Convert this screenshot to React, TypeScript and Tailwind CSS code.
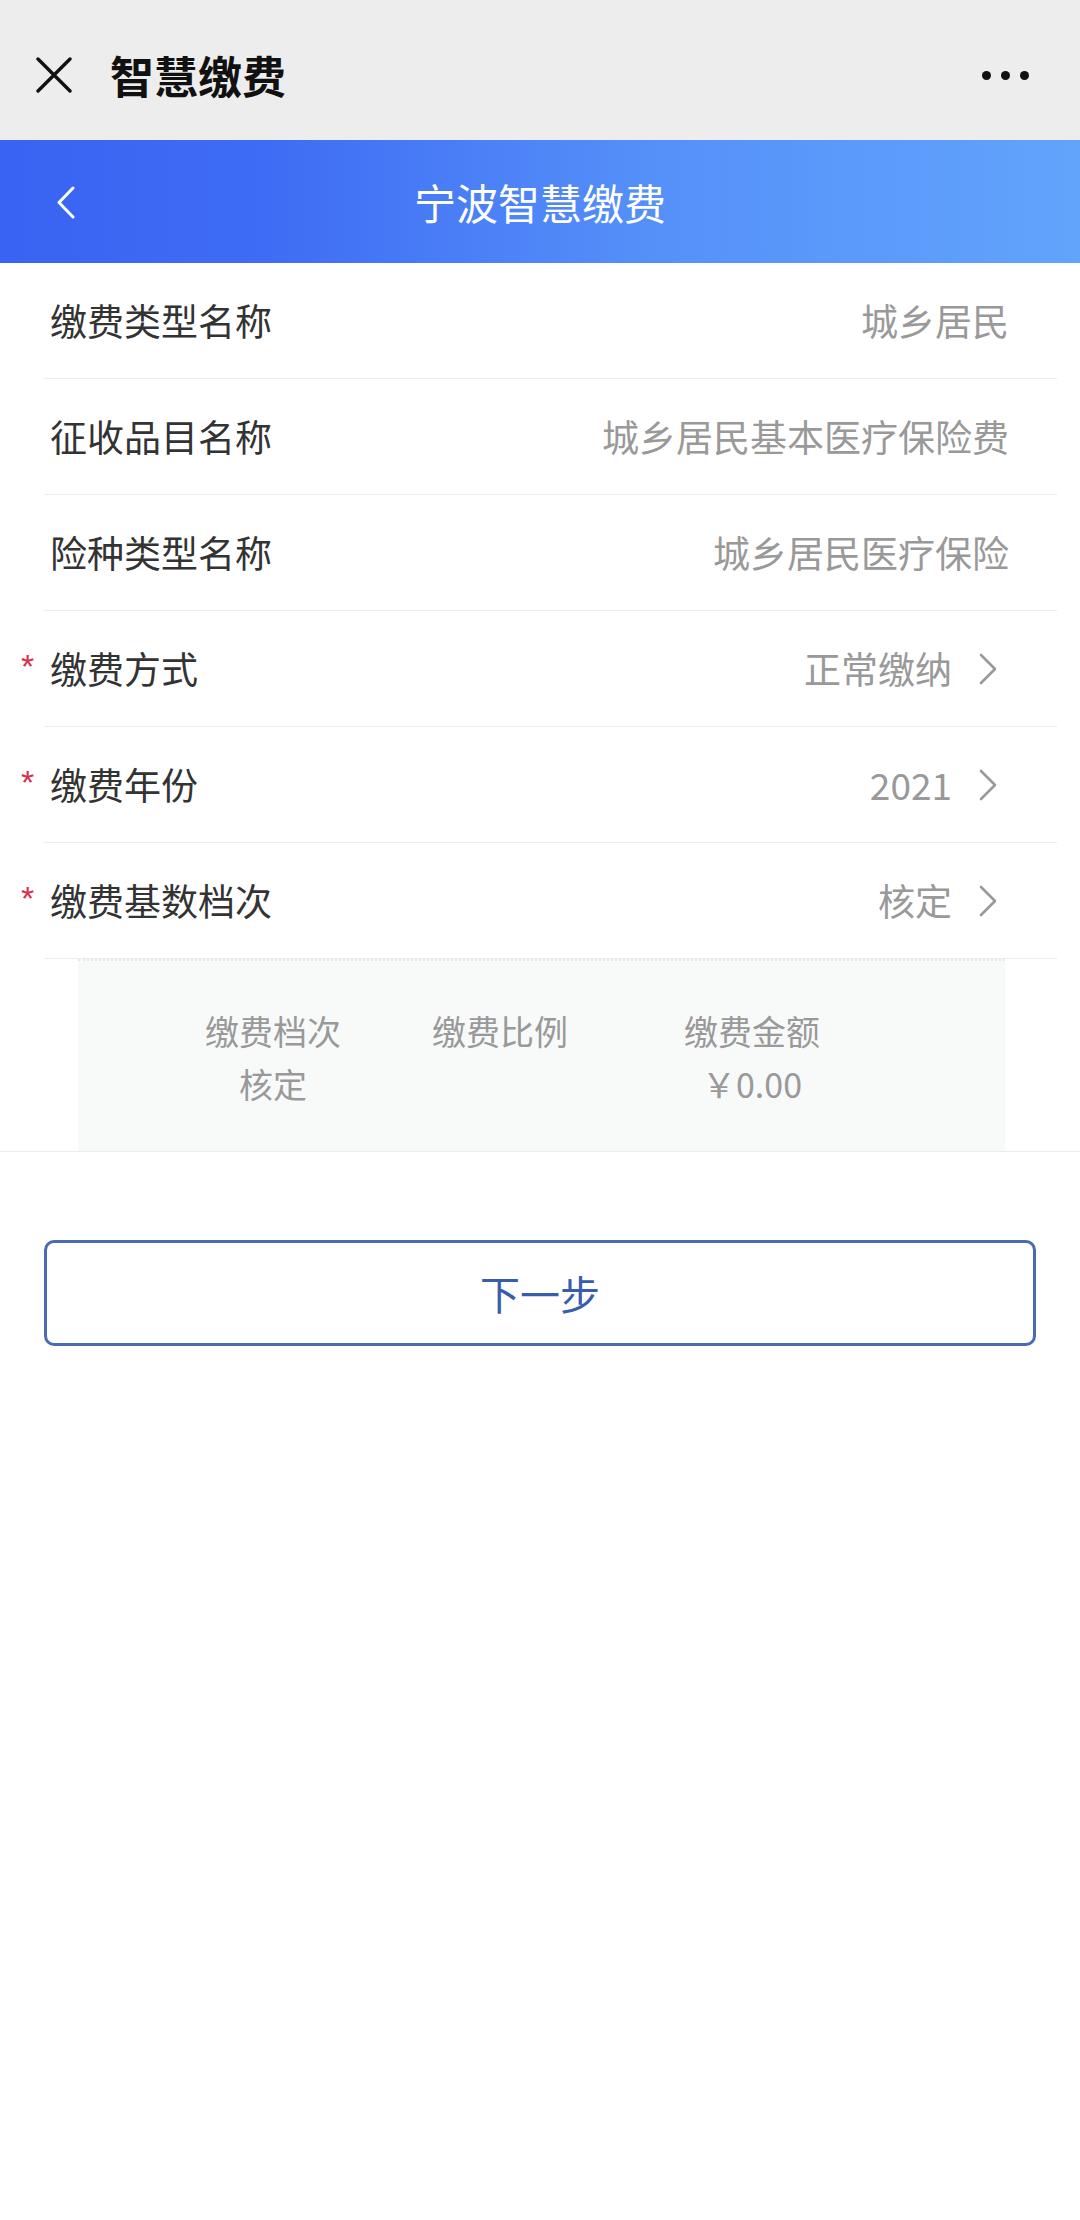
import React from "react";

type RowProps = { label: string; value: string; required?: boolean; chevron?: boolean };

function Row({ label, value, required, chevron }: RowProps) {
  return (
    <div className="relative ml-[44px] mr-[23px] h-[116px] border-b border-[#ececec] flex items-center pl-[6px] pr-[48px]">
      {required && (
        <span className="absolute left-[-23px] top-1/2 -translate-y-[58%] text-[34px] leading-none text-[#d6304c] font-['Liberation_Sans',sans-serif]">
          *
        </span>
      )}
      <span className="text-[37px] leading-none text-[#333333]">{label}</span>
      <span className="ml-auto text-[37px] leading-none text-[#999999]">{value}</span>
      {chevron && (
        <div className="w-[57px] h-[40px] flex items-center pl-[26px]">
          <svg width="20" height="32" viewBox="0 0 20 32" fill="none">
            <path d="M3 2 L17 16 L3 30" stroke="#999999" strokeWidth="2.6" strokeLinecap="round" strokeLinejoin="round" />
          </svg>
        </div>
      )}
    </div>
  );
}

export default function App() {
  return (
    <div className="w-[1080px] min-h-[2220px] bg-white font-['Noto_Sans_CJK_SC',sans-serif]">
      {/* top bar */}
      <div className="h-[140px] bg-[#ededed] flex items-center pt-[10px]">
        <svg className="ml-[36px]" width="36" height="36" viewBox="0 0 36 36" fill="none">
          <path d="M2 2 L34 34 M34 2 L2 34" stroke="#111111" strokeWidth="3.4" strokeLinecap="round" />
        </svg>
        <span className="ml-[38px] text-[44px] leading-none font-bold text-[#111111]">智慧缴费</span>
        <div className="ml-auto mr-[51px] flex items-center gap-[10px]">
          <span className="w-[9px] h-[9px] rounded-full bg-[#111111]" />
          <span className="w-[9px] h-[9px] rounded-full bg-[#111111]" />
          <span className="w-[9px] h-[9px] rounded-full bg-[#111111]" />
        </div>
      </div>

      {/* blue header */}
      <div className="relative h-[123px] flex items-center justify-center bg-[linear-gradient(to_right,#3963f2_0%,#3f6cf4_25%,#5590f9_60%,#62a4fc_100%)]">
        <svg className="absolute left-[56px] top-[46px]" width="20" height="33" viewBox="0 0 20 33" fill="none">
          <path d="M17 2 L3 16.5 L17 31" stroke="#ffffff" strokeWidth="3" strokeLinecap="round" strokeLinejoin="round" />
        </svg>
        <span className="text-[42px] leading-none text-white">宁波智慧缴费</span>
      </div>

      {/* rows */}
      <Row label="缴费类型名称" value="城乡居民" />
      <Row label="征收品目名称" value="城乡居民基本医疗保险费" />
      <Row label="险种类型名称" value="城乡居民医疗保险" />
      <Row label="缴费方式" value="正常缴纳" required chevron />
      <Row label="缴费年份" value="2021" required chevron />
      <Row label="缴费基数档次" value="核定" required chevron />

      {/* detail box */}
      <div className="border-b border-[#ececec]">
        <div className="ml-[78px] w-[927px] h-[192px] bg-[#f8f9f9] border-t-2 border-dotted border-[#e6e8ea] pt-[43px] flex pl-[90px] text-[34px] leading-[53px] text-[#999999]">
          <div className="w-[210px] flex flex-col items-center">
            <span>缴费档次</span>
            <span>核定</span>
          </div>
          <div className="w-[244px] flex flex-col items-center">
            <span>缴费比例</span>
          </div>
          <div className="w-[260px] flex flex-col items-center">
            <span>缴费金额</span>
            <span>￥0.00</span>
          </div>
        </div>
      </div>

      {/* button */}
      <div className="mt-[88px] mx-[44px] h-[106px] border-[3px] border-[#4a6ab2] rounded-[10px] flex items-center justify-center">
        <span className="text-[40px] leading-none text-[#3a5cae]">下一步</span>
      </div>
    </div>
  );
}
